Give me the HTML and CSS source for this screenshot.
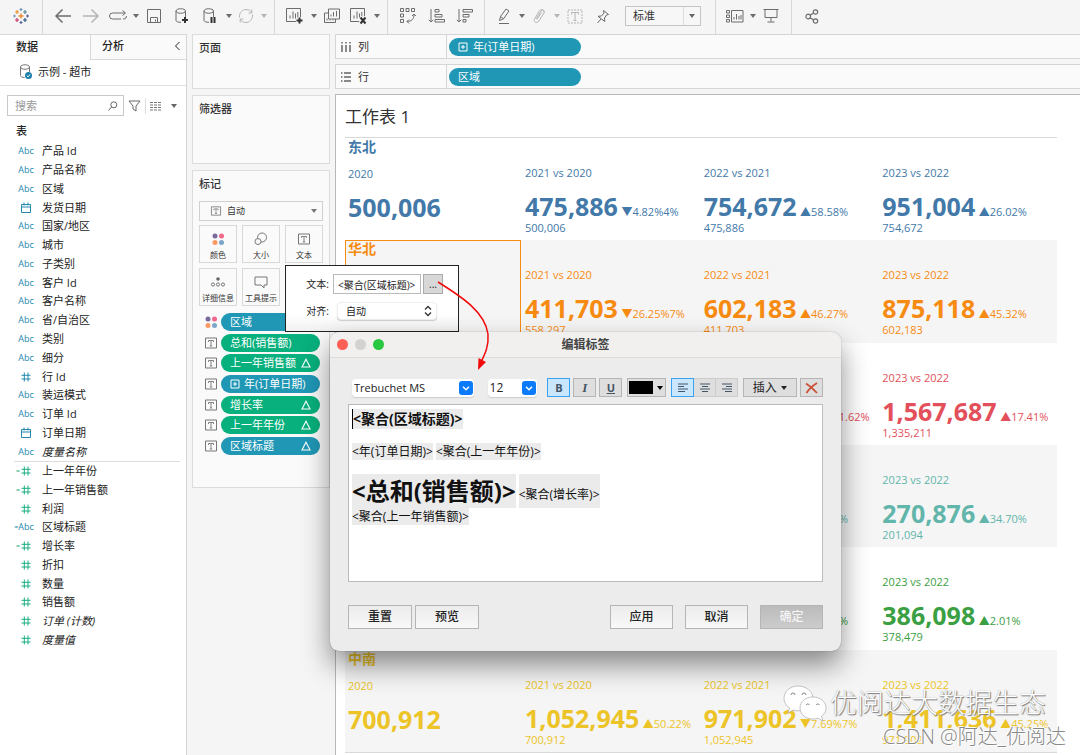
FILE: index.html
```html
<!DOCTYPE html>
<html lang="zh-CN">
<head>
<meta charset="utf-8">
<title>工作表 1</title>
<link rel="stylesheet" href="styles.css">
</head>
<body>
<svg class="defs" aria-hidden="true">
  <symbol id="caret" viewBox="0 0 8 6"><path d="M1 1h6L4 5z" fill="currentColor"/></symbol>
  <symbol id="hash" viewBox="0 0 12 12"><path d="M4.300 1.500v9M8 1.500v9M1.500 4.300h9M1.500 8h9" stroke="currentColor" fill="none"/></symbol>
  <symbol id="cal" viewBox="0 0 12 12"><path d="M1.500 2.500h9v8h-9zM1.500 5h9M4 .500v3M8 .500v3" stroke="currentColor" fill="none"/></symbol>
  <symbol id="tbox" viewBox="0 0 14 12"><path d="M1.500 1h11v10h-11z" fill="none" stroke="currentColor"/><path d="M4.500 5V3.500h5V5M7 3.500v5.500M5.800 9h2.400" fill="none" stroke="currentColor" stroke-width=".9"/></symbol>
  <symbol id="delta" viewBox="0 0 10 10"><path d="M5 1.200L9 9H1z" fill="none" stroke="currentColor" stroke-width="1.100"/></symbol>
  <symbol id="plusbox" viewBox="0 0 10 10"><path d="M1 1h8v8H1zM5 3v4M3 5h4" fill="none" stroke="currentColor"/></symbol>
  <symbol id="dots" viewBox="0 0 14 14"><circle cx="4" cy="4" r="2.500" fill="#7b6a9c"/><circle cx="10.500" cy="4" r="2.500" fill="#f2668b"/><circle cx="4" cy="10.500" r="2.500" fill="#fb9a63"/><circle cx="10.500" cy="10.500" r="2.500" fill="#7ba6c9"/></symbol>
  <symbol id="sheet" viewBox="0 0 20 18"><path d="M1.500 1.500h14v13h-14zM5 11.500v-3M8 11.500V4.500M10.500 11.500V6.500M12.800 11.500V5" fill="none" stroke="currentColor"/></symbol>
  <symbol id="db" viewBox="0 0 16 18"><path d="M2 4v9.500c0 1 2 1.800 5 1.800M11.500 4v6M2 4c0-3 9.500-3 9.500 0S2 7 2 4z" fill="none" stroke="currentColor"/></symbol>
</svg>

<div class="app">
<header class="toolbar">
  <div class="tools brand">
    <svg width="16" height="16" viewBox="0 0 16 16" fill="none" stroke-width="1.200"><path d="M8 5.500v5M5.500 8h5" stroke="#eb8a2f" stroke-width="1.400"/><path d="M8 0v3M6.500 1.500h3" stroke="#6c95b5"/><path d="M8 13v3M6.500 14.500h3" stroke="#59609a"/><path d="M1.500 6.500v3M0 8h3" stroke="#7d9fbd"/><path d="M14.500 6.500v3M13 8h3" stroke="#59609a"/><path d="M4 2v4M2 4h4" stroke="#eb9129"/><path d="M12 2v4M10 4h4" stroke="#59879b"/><path d="M4 10v4M2 12h4" stroke="#c7356d"/><path d="M12 10v4M10 12h4" stroke="#2d5a86"/></svg>
  </div>
  <div class="tools">
    <button aria-label="后退"><svg width="18" height="16" viewBox="0 0 18 16"><path d="M8.500 1.500L2 8l6.500 6.500M2 8h15" fill="none" stroke="currentColor" stroke-width="1.500"/></svg></button>
    <button class="off" aria-label="前进"><svg width="18" height="16" viewBox="0 0 18 16"><path d="M9.500 1.500L16 8l-6.500 6.500M16 8H1" fill="none" stroke="currentColor" stroke-width="1.500"/></svg></button>
    <button class="narrow" aria-label="重做"><svg width="20" height="12" viewBox="0 0 20 12"><path d="M13 9H4.500a3 3 0 0 1 0-6H17M14.500 .500L17.500 3 14.500 5.500M15 9h1a3 3 0 0 0 2.500-3" fill="none" stroke="currentColor"/></svg></button>
    <button class="more" aria-label="更多"><svg width="8" height="6"><use href="#caret"/></svg></button>
    <button aria-label="保存"><svg width="16" height="16" viewBox="0 0 16 16"><path d="M1.500 1.500h13v13h-13zM4.500 14.500V9.500h7v5M9.500 11.500v2" fill="none" stroke="currentColor"/></svg></button>
    <button aria-label="新建数据源"><svg width="16" height="18" viewBox="0 0 16 18"><use href="#db"/><path d="M11 10v6M8 13h6" stroke="#333" stroke-width="2"/></svg></button>
    <button aria-label="暂停自动更新"><svg width="16" height="18" viewBox="0 0 16 18"><use href="#db"/><path d="M9.500 10v6M12.500 10v6" stroke="#333" stroke-width="2"/></svg></button>
    <button class="more" aria-label="更多"><svg width="8" height="6"><use href="#caret"/></svg></button>
    <button class="narrow off" aria-label="刷新"><svg width="18" height="16" viewBox="0 0 18 16"><path d="M2.500 9.500C2 4 6 1.500 9 1.500c2.500 0 4.500 1 5.500 3M14.800 1.500V5h-3.300M15.500 6.500C16 12 12 14.500 9 14.500c-2.500 0-4.500-1-5.500-3M3.200 14.500V11h3.300" fill="none" stroke="currentColor"/></svg></button>
    <button class="more off" aria-label="更多"><svg width="8" height="6"><use href="#caret"/></svg></button>
  </div>
  <div class="tools">
    <button aria-label="新建工作表"><svg width="20" height="18" viewBox="0 0 20 18"><use href="#sheet"/><path d="M14.500 10v7M11 13.500h7" stroke="#f5f5f5" stroke-width="4"/><path d="M14.500 10.500v6M11.500 13.500h6" stroke="#333" stroke-width="2"/></svg></button>
    <button class="more" aria-label="更多"><svg width="8" height="6"><use href="#caret"/></svg></button>
    <button aria-label="复制工作表"><svg width="18" height="16" viewBox="0 0 18 16"><path d="M5.500 1h11v10h-11zM8 8.500v-2M10.500 8.500V4M13.500 8.500V3M5.500 5h-4v9.500h11V11M4 12.500v-2M7 12.500v-1M10 12.500v-1" fill="none" stroke="currentColor"/></svg></button>
    <button class="narrow" aria-label="清除工作表"><svg width="20" height="18" viewBox="0 0 20 18"><use href="#sheet"/><path d="M11 10l6 6.500M17 10l-6 6.500" stroke="#f5f5f5" stroke-width="4"/><path d="M11.500 10.500l5 6M16.500 10.500l-5 6" stroke="#333" stroke-width="2"/></svg></button>
    <button class="more" aria-label="更多"><svg width="8" height="6"><use href="#caret"/></svg></button>
  </div>
  <div class="tools">
    <button aria-label="交换行和列"><svg width="18" height="18" viewBox="0 0 18 18" fill="none" stroke="currentColor"><path d="M1.500 1.500h3v3h-3zM7 1.500h3v3H7zM12.500 1.500h3v3h-3zM1.500 7h3v3h-3zM1.500 12.500h3v3h-3zM8 14.500c4.500 0 7-2.500 7-7M10 12.500l-2 2 2 2M13 9l2-2 2 2"/></svg></button>
    <button class="wide" aria-label="升序排序"><svg width="18" height="16" viewBox="0 0 18 16" fill="none" stroke="currentColor"><path d="M3 1v13M.800 11.800L3 14l2.200-2.200M7 1.500h4v2.500H7zM7 6.500h7v2.500H7zM7 11.500h9.500v2.500H7z"/></svg></button>
    <button class="narrow" aria-label="降序排序"><svg width="18" height="16" viewBox="0 0 18 16" fill="none" stroke="currentColor"><path d="M3 1v13M.800 11.800L3 14l2.200-2.200M7 1.500h9.500v2.500H7zM7 6.500h6v2.500H7zM7 11.500h3v2.500H7z"/></svg></button>
  </div>
  <div class="tools">
    <button class="narrow" aria-label="突出显示"><svg width="14" height="17" viewBox="0 0 14 17" fill="none" stroke="currentColor"><path d="M2.500 12.500l1-4L9 1l3 2-5.500 7.800zM3.500 8.500l3 2.300M2 15.500h10"/></svg></button>
    <button class="more" aria-label="更多"><svg width="8" height="6"><use href="#caret"/></svg></button>
    <button class="narrow off" aria-label="组成员"><svg width="14" height="16" viewBox="0 0 14 16" fill="none" stroke="currentColor"><path d="M4 11l5-8c1-1.500 4 0 3 2L7 13c-2 3-6 1-4.500-2L7 3.500c2-3.500 6-2 5 1M5 11.500l4.500-7"/></svg></button>
    <button class="more off" aria-label="更多"><svg width="8" height="6"><use href="#caret"/></svg></button>
    <button class="off" aria-label="显示标记标签"><svg width="16" height="15" viewBox="0 0 16 15" fill="none" stroke="currentColor"><path d="M1 1h14v13H1z" stroke-dasharray="2 1"/><path d="M4.500 5.500v-2h7v2M8 3.500v8M6.500 11.500h3"/></svg></button>
    <button aria-label="固定轴"><svg width="14" height="15" viewBox="0 0 14 15" fill="none" stroke="currentColor"><path d="M7.500 1.500l5 4-2 .500-2 3 .300 3.500L2 7.300l3.500-.300 2.500-3zM5 10l-3.500 4"/></svg></button>
    <label class="fit"><select aria-label="适合"><option>标准</option></select><svg width="8" height="6"><use href="#caret"/></svg></label>
  </div>
  <div class="tools">
    <button class="narrow" aria-label="智能推荐"><svg width="20" height="15" viewBox="0 0 20 15" fill="none" stroke="currentColor"><path d="M1.500 1.500h3v2.500h-3zM1.500 6h3v2.500h-3zM1.500 10.500h3V13h-3zM6.500 1.500h11.500v11.500H6.500zM9 10.500V8M11.500 10.500V5M14 10.500V7M16 10.500V6"/></svg></button>
    <button class="more" aria-label="更多"><svg width="8" height="6"><use href="#caret"/></svg></button>
    <button aria-label="演示模式"><svg width="16" height="16" viewBox="0 0 16 16" fill="none" stroke="currentColor"><path d="M.500 1.500h15M2 1.500v8h12v-8M8 9.500v4M4.500 14h7"/></svg></button>
  </div>
  <div class="tools">
    <button aria-label="共享"><svg width="14" height="15" viewBox="0 0 14 15" fill="none" stroke="currentColor" stroke-width="1.200"><circle cx="3.200" cy="7.500" r="2.300"/><circle cx="10.500" cy="3" r="2.200"/><circle cx="10.500" cy="12" r="2.200"/><path d="M5.200 6.300l3.400-2.200M5.200 8.700l3.400 2.200"/></svg></button>
  </div>
</header>

<div class="workspace">
  <aside class="data">
    <nav class="tabs">
      <button class="tab on">数据</button>
      <button class="tab">分析<svg width="7" height="10" viewBox="0 0 7 10"><path d="M5.500 1L1.500 5l4 4" fill="none" stroke="currentColor"/></svg></button>
    </nav>
    <div class="source"><svg width="14" height="16" viewBox="0 0 14 16"><path d="M1.500 3v8.500c0 1 1.500 2 4 2M10.500 3v5M1.500 3c0-3 9-3 9 0s-9 3-9 0z" fill="none" stroke="#777"/><circle cx="9.500" cy="11.500" r="3.500" fill="#1a7fa8"/><path d="M7.800 11.600l1.300 1.200 2-2.400" fill="none" stroke="#fff"/></svg>示例 - 超市</div>
    <div class="find">
      <label class="search"><input type="text" placeholder="搜索" aria-label="搜索"><svg width="10" height="10" viewBox="0 0 10 10"><circle cx="5.800" cy="3.800" r="3" fill="none" stroke="#666"/><path d="M3.500 6L.500 9.500" stroke="#666"/></svg></label>
      <button aria-label="筛选"><svg width="13" height="12" viewBox="0 0 13 12"><path d="M1 1h11L8 6v5L5 9V6z" fill="none" stroke="#666"/></svg></button>
      <button class="view" aria-label="视图"><svg width="12" height="10" viewBox="0 0 12 10"><path d="M0 1.500h12M0 4h12M0 6.500h12M0 9h12" stroke="#777" stroke-dasharray="3 1"/></svg></button>
      <button class="drop" aria-label="更多"><svg width="8" height="6"><use href="#caret"/></svg></button>
    </div>
    <h2>表</h2>
    <ul class="fields dims">
      <li><i>Abc</i>产品 Id</li><li><i>Abc</i>产品名称</li><li><i>Abc</i>区域</li>
      <li><i><svg width="12" height="12"><use href="#cal"/></svg></i>发货日期</li>
      <li><i>Abc</i>国家/地区</li><li><i>Abc</i>城市</li><li><i>Abc</i>子类别</li><li><i>Abc</i>客户 Id</li><li><i>Abc</i>客户名称</li><li><i>Abc</i>省/自治区</li><li><i>Abc</i>类别</li><li><i>Abc</i>细分</li>
      <li><i><svg width="12" height="12"><use href="#hash"/></svg></i>行 Id</li>
      <li><i>Abc</i>装运模式</li><li><i>Abc</i>订单 Id</li>
      <li><i><svg width="12" height="12"><use href="#cal"/></svg></i>订单日期</li>
      <li><i>Abc</i><em>度量名称</em></li>
    </ul>
    <ul class="fields measures">
      <li><i class="calc"><svg width="12" height="12"><use href="#hash"/></svg></i>上一年年份</li>
      <li><i class="calc"><svg width="12" height="12"><use href="#hash"/></svg></i>上一年销售额</li>
      <li><i><svg width="12" height="12"><use href="#hash"/></svg></i>利润</li>
      <li><i class="calc dim">Abc</i>区域标题</li>
      <li><i class="calc"><svg width="12" height="12"><use href="#hash"/></svg></i>增长率</li>
      <li><i><svg width="12" height="12"><use href="#hash"/></svg></i>折扣</li>
      <li><i><svg width="12" height="12"><use href="#hash"/></svg></i>数量</li>
      <li><i><svg width="12" height="12"><use href="#hash"/></svg></i>销售额</li>
      <li><i><svg width="12" height="12"><use href="#hash"/></svg></i><em>订单 (计数)</em></li>
      <li><i><svg width="12" height="12"><use href="#hash"/></svg></i><em>度量值</em></li>
    </ul>
  </aside>

  <section class="cards">
    <div class="card pages"><h3>页面</h3></div>
    <div class="card filters"><h3>筛选器</h3></div>
    <div class="card marks">
      <h3>标记</h3>
      <label class="marktype"><svg width="12" height="10"><use href="#tbox"/></svg><select aria-label="标记类型"><option>自动</option></select><svg width="8" height="6"><use href="#caret"/></svg></label>
      <div class="props">
        <button><svg width="14" height="14"><use href="#dots"/></svg>颜色</button>
        <button><svg width="14" height="14" viewBox="0 0 14 14" fill="none" stroke="#777"><circle cx="8" cy="5.500" r="4.500"/><circle cx="4" cy="9.500" r="3" fill="#fafafa"/></svg>大小</button>
        <button><svg width="14" height="14" color="#777"><use href="#tbox"/></svg>文本</button>
        <button><svg width="16" height="14" viewBox="0 0 16 14" fill="none" stroke="#777"><circle cx="8" cy="4" r="1.800" fill="#666" stroke="none"/><circle cx="3" cy="9.500" r="1.600"/><circle cx="8" cy="9.500" r="1.600"/><circle cx="13" cy="9.500" r="1.600"/></svg>详细信息</button>
        <button><svg width="14" height="14" viewBox="0 0 14 14" fill="none" stroke="#777"><path d="M1 2h12v8h-3v3L7 10H1z"/></svg>工具提示</button>
      </div>
      <ul class="pills">
        <li><svg width="14" height="14"><use href="#dots"/></svg><span class="pill">区域</span></li>
        <li><svg width="14" height="12"><use href="#tbox"/></svg><span class="pill green">总和(销售额)</span></li>
        <li><svg width="14" height="12"><use href="#tbox"/></svg><span class="pill green">上一年销售额<svg class="calcmark" width="10" height="10"><use href="#delta"/></svg></span></li>
        <li><svg width="14" height="12"><use href="#tbox"/></svg><span class="pill"><svg width="10" height="10"><use href="#plusbox"/></svg>年(订单日期)</span></li>
        <li><svg width="14" height="12"><use href="#tbox"/></svg><span class="pill green">增长率<svg class="calcmark" width="10" height="10"><use href="#delta"/></svg></span></li>
        <li><svg width="14" height="12"><use href="#tbox"/></svg><span class="pill green">上一年年份<svg class="calcmark" width="10" height="10"><use href="#delta"/></svg></span></li>
        <li><svg width="14" height="12"><use href="#tbox"/></svg><span class="pill">区域标题<svg class="calcmark" width="10" height="10"><use href="#delta"/></svg></span></li>
      </ul>
    </div>
  </section>

  <main class="view-area">
    <div class="shelf"><div class="shelf-name"><svg width="12" height="12" viewBox="0 0 12 12"><path d="M2 1v1.500M6 1v1.500M10 1v1.500M2 4v7M6 4v7M10 4v7" stroke="#666" stroke-width="1.500"/></svg>列</div><span class="pill"><svg width="10" height="10"><use href="#plusbox"/></svg>年(订单日期)</span></div>
    <div class="shelf"><div class="shelf-name"><svg width="12" height="12" viewBox="0 0 12 12"><path d="M1 2h1.500M1 6h1.500M1 10h1.500M4 2h7M4 6h7M4 10h7" stroke="#666" stroke-width="1.500"/></svg>行</div><span class="pill">区域</span></div>
    <div class="sheet">
      <h1>工作表 1</h1>
      <table>
        <tbody>
        <tr class="blue">
          <th scope="row"><div class="region">东北</div><div class="period">2020</div><div class="total">500,006</div></th>
          <td><div class="period">2021 vs 2020</div><div class="total">475,886 <small>▼4.82%4%</small></div><div class="prev">500,006</div></td>
          <td><div class="period">2022 vs 2021</div><div class="total">754,672 <small>▲58.58%</small></div><div class="prev">475,886</div></td>
          <td><div class="period">2023 vs 2022</div><div class="total">951,004 <small>▲26.02%</small></div><div class="prev">754,672</div></td>
        </tr>
        <tr class="orange">
          <th scope="row" class="selected"><div class="region">华北</div></th>
          <td><div class="period">2021 vs 2020</div><div class="total">411,703 <small>▼26.25%7%</small></div><div class="prev">558,297</div></td>
          <td><div class="period">2022 vs 2021</div><div class="total">602,183 <small>▲46.27%</small></div><div class="prev">411,703</div></td>
          <td><div class="period">2023 vs 2022</div><div class="total">875,118 <small>▲45.32%</small></div><div class="prev">602,183</div></td>
        </tr>
        <tr class="red">
          <th></th><td></td>
          <td><div class="period">2022 vs 2021</div><div class="total">1,335,211 <small>▲31.62%</small></div></td>
          <td><div class="period">2023 vs 2022</div><div class="total">1,567,687 <small>▲17.41%</small></div><div class="prev">1,335,211</div></td>
        </tr>
        <tr class="teal">
          <th></th><td></td>
          <td><div class="period">2022 vs 2021</div><div class="total">201,094 <small>▲30.00%</small></div></td>
          <td><div class="period">2023 vs 2022</div><div class="total">270,876 <small>▲34.70%</small></div><div class="prev">201,094</div></td>
        </tr>
        <tr class="green-row">
          <th></th><td></td>
          <td><div class="period">2022 vs 2021</div><div class="total">378,479 <small>▲30.00%</small></div></td>
          <td><div class="period">2023 vs 2022</div><div class="total">386,098 <small>▲2.01%</small></div><div class="prev">378,479</div></td>
        </tr>
        <tr class="yellow">
          <th scope="row"><div class="region">中南</div><div class="period">2020</div><div class="total">700,912</div></th>
          <td><div class="period">2021 vs 2020</div><div class="total">1,052,945 <small>▲50.22%</small></div><div class="prev">700,912</div></td>
          <td><div class="period">2022 vs 2021</div><div class="total">971,902 <small>▼7.69%7%</small></div><div class="prev">1,052,945</div></td>
          <td><div class="period">2023 vs 2022</div><div class="total">1,411,636 <small>▲45.25%</small></div><div class="prev">971,902</div></td>
        </tr>
        </tbody>
      </table>
    </div>
  </main>
</div>
</div>

<section class="popup">
  <label for="ptext">文本:</label><div class="row"><input id="ptext" type="text" value="&lt;聚合(区域标题)&gt;"><button>...</button></div>
  <label for="palign">对齐:</label><div class="stepper"><select id="palign"><option>自动</option></select><svg width="8" height="12" viewBox="0 0 8 12"><path d="M1 4.500L4 1.500l3 3M1 7.500l3 3 3-3" fill="none" stroke="#333" stroke-width="1.300"/></svg></div>
</section>

<section class="dialog" role="dialog" aria-labelledby="dlg-title">
  <header class="titlebar"><span class="lights"><b class="close"></b><b></b><b class="zoom"></b></span><h2 id="dlg-title">编辑标签</h2></header>
  <div class="dialog-body">
    <div class="format">
      <div class="combo font"><select aria-label="字体"><option>Trebuchet MS</option></select><svg width="14" height="14" viewBox="0 0 14 14"><rect width="14" height="14" rx="3" fill="#0b7bfb"/><path d="M4 5.800l3 3 3-3" fill="none" stroke="#fff" stroke-width="1.500"/></svg></div>
      <div class="combo size"><select aria-label="字号"><option>12</option></select><svg width="14" height="14" viewBox="0 0 14 14"><rect width="14" height="14" rx="3" fill="#0b7bfb"/><path d="M4 5.800l3 3 3-3" fill="none" stroke="#fff" stroke-width="1.500"/></svg></div>
      <div class="styles"><button class="on"><b>B</b></button><button><i>I</i></button><button><u>U</u></button></div>
      <button class="swatch" aria-label="颜色"><span></span><svg width="8" height="6"><use href="#caret"/></svg></button>
      <div class="align">
        <button class="on" aria-label="左对齐"><svg width="10" height="10" viewBox="0 0 10 10"><path d="M0 1h10M0 3.500h6M0 6h10M0 8.500h7" stroke="currentColor"/></svg></button><button aria-label="居中"><svg width="10" height="10" viewBox="0 0 10 10"><path d="M0 1h10M2 3.500h6M0 6h10M2 8.500h6" stroke="currentColor"/></svg></button><button aria-label="右对齐"><svg width="10" height="10" viewBox="0 0 10 10"><path d="M0 1h10M4 3.500h6M0 6h10M3 8.500h7" stroke="currentColor"/></svg></button>
      </div>
      <button class="insert">插入<svg width="8" height="6"><use href="#caret"/></svg></button>
      <button class="clear" aria-label="清除"><svg width="13" height="12" viewBox="0 0 13 12"><path d="M1 1.500c4 2.500 8 6 11 9.500M12 1C8 3.500 4 7 1.500 11" fill="none" stroke="#c94f35" stroke-width="1.700"/></svg></button>
    </div>
    <div class="editor" contenteditable="true" spellcheck="false">
      <p class="l1"><span>&lt;聚合(区域标题)&gt;</span></p>
      <p class="l2"><span>&lt;年(订单日期)&gt;</span> <span>&lt;聚合(上一年年份)&gt;</span></p>
      <p class="l3"><span class="big">&lt;总和(销售额)&gt;</span> <span>&lt;聚合(增长率)&gt;</span></p>
      <p class="l4"><span>&lt;聚合(上一年销售额)&gt;</span></p>
    </div>
    <footer class="actions"><button>重置</button><button>预览</button><button class="apply">应用</button><button>取消</button><button class="ok" disabled>确定</button></footer>
  </div>
</section>

<svg class="arrow" width="70" height="100" viewBox="0 0 70 100" aria-hidden="true"><path d="M8 6C32 21 55 36 58 58c1 12-3 20-7 28" fill="none" stroke="#f00a0a" stroke-width="1.500"/><path d="M48 94l.500-12 7.500 4z" fill="#f00a0a"/></svg>

<div class="marks-over">
  <div class="wechat"><svg width="44" height="40" viewBox="0 0 44 40"><g fill="#fff" stroke="#aaa" stroke-width=".7"><path d="M15 1C7 1 1 6.500 1 13.500c0 4 2 7 5.500 9.500L5 28l5-3c2 .7 4 1 6 .8C24 25 30 20 30 13.500 30 6.500 23 1 15 1z"/><path d="M30 12c-7.500 0-13 4.800-13 11s5.500 11 13 11c2 0 3.500-.300 5-.8l5 3-1.500-5c3-2 4.500-5 4.500-8.200 0-6.200-5.500-11-13-11z"/></g><g fill="none" stroke="#888"><path d="M8 10a2 2 0 0 1 4 0M19 10a2 2 0 0 1 4 0M23 20a2 2 0 0 1 3.500 0M33 20a2 2 0 0 1 3.500 0"/></g></svg>优阅达大数据生态</div>
  <div class="csdn">CSDN @阿达_优阅达</div>
</div>
</body>
</html>
```
FILE: styles.css
```css
* { box-sizing: border-box; }
html, body { margin: 0; height: 100%; }
body {
  position: relative;
  overflow: hidden;
  background: #f5f5f5;
  color: #333;
  font: 11px/16px "Open Sans", "Noto Sans CJK SC", sans-serif;
}
h1, h2, h3, p, ul { margin: 0; padding: 0; }
ul { list-style: none; }
button, input, select { font: inherit; color: inherit; margin: 0; padding: 0; border: 0; background: none; }
select { appearance: none; outline: 0; }
svg { display: block; flex: none; }
.defs { display: none; }

.app { display: flex; flex-direction: column; height: 100%; }

/* toolbar */
.toolbar { display: flex; flex: none; height: 34px; background: #f5f5f5; color: #6c6c6c; }
.tools { display: flex; align-items: center; padding: 0 6px 2px; border-left: 1px solid #d8d8d8; }
.tools.brand { width: 42px; padding-left: 13px; border: 0; }
.tools button { display: flex; justify-content: center; align-items: center; width: 28px; height: 26px; }
.tools button.narrow { width: 26px; }
.tools button.wide { width: 30px; }
.tools button.more { width: 9px; }
.tools button.off { color: #b5b5b5; }
.fit { display: flex; align-items: center; width: 76px; height: 20px; margin: 0 8px; border: 1px solid #c4c4c4; background: #f7f7f7; color: #666; }
.fit select { flex: 1; min-width: 0; height: 18px; padding-left: 7px; border-right: 1px solid #ddd; color: #333; }
.fit svg { margin: 0 4px; }

.workspace { display: grid; grid-template-columns: 187px 148px 1fr; flex: 1; min-height: 0; }

/* data pane */
.data { background: #fff; border-right: 1px solid #d5d5d5; color: #222; }
.tabs { display: flex; height: 26px; border-top: 1px solid #d8d8d8; }
.tab { flex: 1; display: flex; justify-content: space-between; align-items: center; padding: 0 5px 2px 11px; border-left: 1px solid #d8d8d8; border-bottom: 1px solid #d8d8d8; background: #fafafa; font-weight: 500; }
.tab.on { flex: 0 0 90px; padding-left: 16px; border: 0; background: #fff; }
.source { display: flex; align-items: center; gap: 5px; height: 26px; padding: 0 0 2px 19px; border-bottom: 1px solid #e2e2e2; }
.find { display: flex; align-items: center; gap: 4px; padding: 9px 0 0 7px; }
.search { display: flex; align-items: center; width: 117px; height: 21px; padding: 0 5px 0 7px; border: 1px solid #c9c9c9; }
.search input { flex: 1; min-width: 0; outline: 0; }
.search input::placeholder { color: #999; }
.find .view { padding: 3px 4px 3px 4px; border-left: 1px solid #ddd; }
.find .drop { color: #666; }
.data h2 { padding: 7px 0 3px 16px; font-size: 11px; line-height: 16px; font-weight: 500; }
.fields { display: grid; grid-auto-rows: 1fr; }
.dims { min-height: 319px; }
.measures { min-height: 188px; margin: 0 6px 0 14px; border-top: 1px solid #ddd; }
.fields li { display: flex; align-items: center; padding-left: 16px; }
.measures li { padding-left: 2px; }
.fields i { display: flex; justify-content: center; align-items: center; width: 20px; margin-right: 6px; color: #2488ae; font: 9px/12px "Open Sans", sans-serif; }
.measures i { color: #19ad82; }
.measures i.dim { color: #2488ae; }
.fields .calc::before { content: "="; width: 4px; margin-left: -4px; font-size: 7px; }

/* cards */
.cards { display: flex; flex-direction: column; gap: 6px; padding: 0 5px; }
.card { border: 1px solid #dcdcdc; background: #fafafa; padding: 5px 6px; }
.card h3 { font-size: 11px; line-height: 16px; font-weight: 500; }
.pages { min-height: 55px; }
.filters { min-height: 69px; }
.marks { min-height: 318px; }
.marktype { display: flex; align-items: center; height: 20px; margin-top: 9px; padding: 0 4px 0 10px; border: 1px solid #d0d0d0; color: #777; font-size: 9px; }
.marktype select { flex: 1; padding-left: 5px; color: #333; }
.props { display: grid; grid-template-columns: repeat(3, 1fr); gap: 5px; margin-top: 4px; }
.props button { display: flex; flex-direction: column; align-items: center; gap: 1px; height: 38px; padding-top: 6px; border: 1px solid #d8d8d8; font-size: 8px; color: #333; white-space: nowrap; }
.pills { display: grid; grid-auto-rows: 1fr; min-height: 144px; margin-top: 6px; }
.pills li { display: flex; align-items: center; gap: 3px; padding: 0 3px 0 5px; color: #777; }
.pill { display: flex; align-items: center; gap: 5px; flex: 1; height: 18px; padding: 0 9px; border-radius: 9px; background: #1f97b5; color: #fff; font-size: 11px; white-space: nowrap; }
.pills .pill { gap: 4px; }
.pill.green { background: #07b07c; }
.calcmark { margin-left: auto; }

/* shelves and sheet */
.view-area { display: flex; flex-direction: column; min-width: 0; }
.shelf { display: flex; align-items: center; flex: none; height: 25px; margin-bottom: 5px; border: 1px solid #d5d5d5; border-right: 0; background: #fafafa; }
.shelf-name { display: flex; align-items: center; gap: 6px; width: 111px; height: 100%; padding-left: 4px; border-right: 1px solid #d5d5d5; }
.shelf .pill { flex: 0 0 132px; margin-left: 2px; }
.sheet { flex: 1; min-height: 0; padding: 0 23px 0 9px; border: solid #b8b8b8; border-width: 1px 0 0 1px; background: #fff; }
.sheet h1 { padding: 9px 0 8px 0; font-size: 17px; line-height: 25px; font-weight: 400; }
table { width: 100%; height: 616px; table-layout: fixed; border-collapse: separate; border-spacing: 0; border-top: 1px solid #d9d9d9; border-bottom: 1px solid #d9d9d9; }
th, td { padding: 0 0 0 3px; vertical-align: top; text-align: left; font-weight: 500; white-space: nowrap; }
th { width: 176px; }
tr:nth-child(even) { background: #f5f5f5; }
td { padding: 17px 0 0 4px; }
.region { font-size: 14px; line-height: 18px; font-weight: 700; }
.period, .prev { font-size: 11px; line-height: 12px; }
.period { margin-top: 12px; }
.total { margin-top: 10px; font-size: 25px; line-height: 34px; font-weight: 700; }
.total small { font-size: 11px; line-height: 12px; font-weight: 500; margin-left: -3px; }
.prev { margin-top: -1px; }
th.selected { border: 1px solid #f78c10; padding-left: 2px; }
th.selected .region { margin-top: -1px; }
.blue { color: #4279a9; }
.orange { color: #f78b12; }
.red { color: #e34f5a; }
.teal { color: #62b5aa; }
.green-row { color: #3ba043; }
.yellow { color: #edc427; }

/* text popup */
.popup { position: absolute; left: 285px; top: 265px; width: 174px; display: grid; grid-template-columns: 43px minmax(0, 1fr); align-items: center; gap: 8px 4px; padding: 8px 15px 11px 0; border: 1px solid #222; background: linear-gradient(#fff 75%, #f1f1f1); color: #222; font-size: 10px; }
.popup label { text-align: right; }
.popup .row { display: flex; gap: 2px; }
.popup .row input { flex: 1; min-width: 0; height: 20px; padding: 0 4px; border: 1px solid #bbb; background: #fff; }
.popup .row button { width: 20px; height: 20px; border: 1px solid #aaa; background: #d8d8d8; line-height: 12px; }
.stepper { display: flex; align-items: center; height: 18px; margin: 0 6px 0 4px; padding: 0 4px 0 8px; border: 1px solid #eee; border-radius: 4px; background: #fff; box-shadow: 0 1px 1px #ccc; }
.stepper select { flex: 1; min-width: 0; }

/* label editor */
.dialog { position: absolute; left: 330px; top: 332px; width: 511px; border-radius: 9px; background: #ececec; color: #222; box-shadow: 0 0 1px rgba(0, 0, 0, .5), 0 14px 28px rgba(0, 0, 0, .45); }
.titlebar { display: grid; grid-template-columns: 80px 1fr 80px; align-items: center; height: 26px; border-bottom: 1px solid #dcdcdc; border-radius: 9px 9px 0 0; background: #f1f0ef; }
.titlebar h2 { text-align: center; font-size: 12px; font-weight: 700; color: #444; }
.lights { display: flex; gap: 7px; padding-left: 7px; }
.lights b { width: 11px; height: 11px; border-radius: 50%; background: #d3d2d1; }
.lights .close { background: #fd5f57; }
.lights .zoom { background: #28c840; }
.dialog-body { padding: 20px 18px 22px; }
.format { display: flex; gap: 5px; align-items: center; height: 19px; padding-left: 4px; }
.format button { display: flex; justify-content: center; align-items: center; gap: 3px; height: 19px; border: 1px solid #b5b5b5; background: #dedede; color: #445566; }
.combo { display: flex; align-items: center; height: 18px; padding-right: 1px; border-radius: 4px; background: #fff; box-shadow: 0 1px 1px #ccc; }
.combo select { flex: 1; min-width: 0; padding-left: 2px; }
.font { width: 122px; margin-right: 9px; }
.size { width: 50px; margin-right: 5px; font-size: 12px; }
.styles { display: flex; gap: 3px; }
.styles button { width: 23px; }
.styles i { font-family: "Liberation Serif", serif; font-size: 13px; font-weight: 700; }
.styles u { font-weight: 700; }
.format .on { border-color: #38a3f5; background: #c9e6fd; }
.format .swatch { width: 39px; color: #000; }
.swatch span { width: 24px; height: 13px; background: #000; }
.align { display: flex; }
.align button { width: 22px; border-color: #ccc; border-left-width: 0; }
.align .on { width: 23px; border-left-width: 1px; }
.format .insert { width: 54px; color: #222; font-size: 12px; }
.format .clear { width: 23px; margin-left: -2px; }
.editor { min-height: 178px; margin-top: 7px; padding: 4px 3px; border: 1px solid #bbb; background: #fff; color: #111; font-size: 12px; line-height: 17px; outline: 0; }
.editor span { display: inline-block; background: #ebebeb; }
.editor .l1 { margin-bottom: 14px; font-size: 14px; line-height: 20px; font-weight: 700; }
.editor .l1 span { border-left: 1px solid #000; }
.editor .l2 { margin-bottom: 14px; }
.editor .l3 { display: flex; gap: 3px; }
.editor .l3 span { line-height: 34px; padding-top: 4px; height: 34px; }
.editor .l3 .big { font-size: 24px; font-weight: 700; padding: 0; }
.actions { display: flex; margin-top: 23px; gap: 3px; }
.actions button { width: 64px; height: 24px; border: 1px solid #b5b5b5; background: linear-gradient(#ececec, #f8f8f8); font-size: 12px; font-weight: 500; }
.actions .apply { width: 63px; margin-left: auto; }
.actions .apply ~ button { width: 63px; margin-left: 9px; }
.actions .ok { background: linear-gradient(#bbb, #ccc); color: #f4f4f4; }

.arrow { position: absolute; left: 430px; top: 276px; pointer-events: none; }

/* watermarks */
.marks-over { position: absolute; right: 14px; bottom: 6px; display: flex; flex-direction: column; align-items: flex-end; pointer-events: none; }
.wechat { display: flex; align-items: center; gap: 3px; margin-right: 20px; font-size: 27px; line-height: 34px; font-weight: 300; color: #fff; text-shadow: 1px 1px 1px #777, 0 0 1px #888; }
.wechat svg { margin-top: 4px; }
.csdn { font-size: 20px; line-height: 24px; font-weight: 300; color: #888; text-shadow: 1px 1px 0 #fff, -1px -1px 0 #fff; }
```
